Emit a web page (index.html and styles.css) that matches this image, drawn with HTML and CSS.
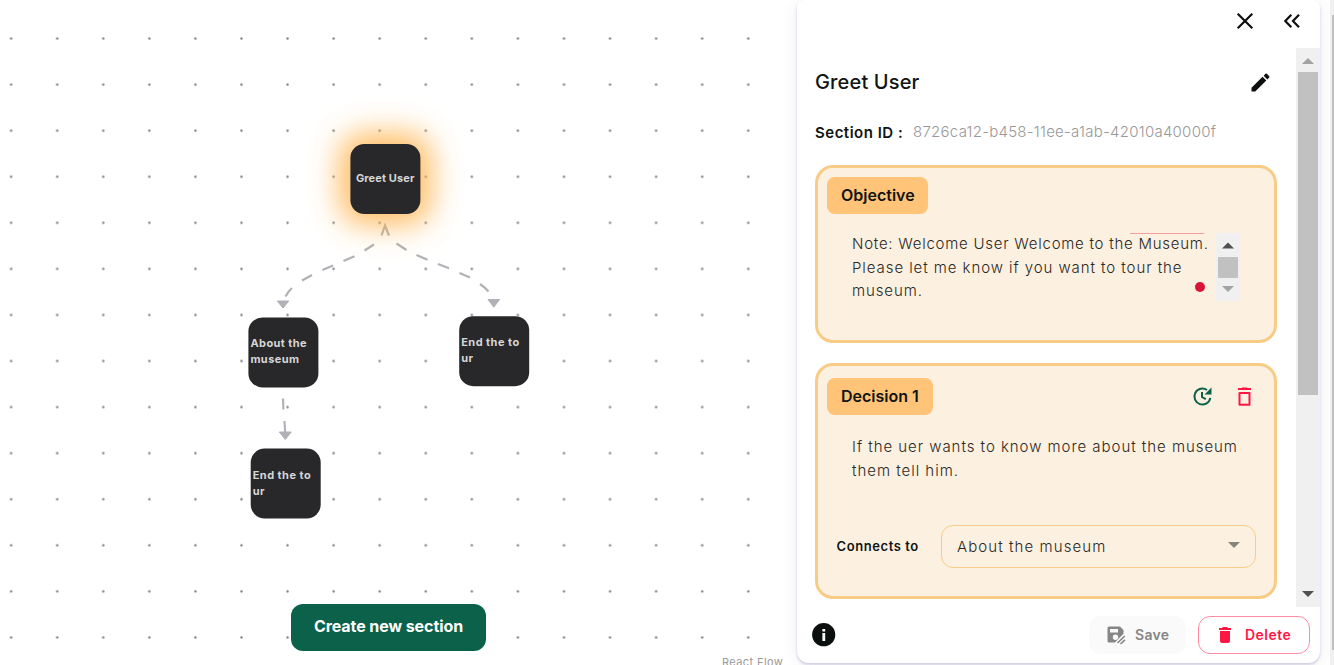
FILE: index.html
```html
<!DOCTYPE html>
<html lang="en">
<head>
<meta charset="utf-8">
<title>Section editor</title>
<link rel="stylesheet" href="styles.css">
</head>
<body>
<div class="app">
  <main class="canvas">
    <svg class="grid" width="786" height="665">
      <defs><pattern id="dots" x="-11.9" y="15.5" width="46.07" height="46.07" patternUnits="userSpaceOnUse"><circle cx="23.03" cy="23.03" r="1.2" fill="#81818a"/></pattern></defs>
      <rect width="786" height="665" fill="url(#dots)"/>
    </svg>
    <svg class="edges" width="786" height="665" fill="none" stroke="#b1b1b7" stroke-width="2.2">
      <path d="M381.5 235.5 385 225.500 389 235.500"/>
      <path d="M374 244.500 364.500 250.500M354.500 256.300 343.500 261M333 265.500 322.500 270M312 275 302 280.500M292 288 Q288 291.500 285.500 296.500"/>
      <path d="M396.500 243.500 406.500 250M416.500 255 427.500 259.800M438 264 449 268.300M459.500 273 470 277.500M480 284 Q485 287.500 488.500 291.500"/>
      <path d="M283 398.500 283.400 409.500M284.500 421 285.200 433"/>
      <path fill="#b1b1b7" stroke-width="1" stroke-linejoin="round" d="M277.200 301h11.600L283 308zM488 299.500h11.600L493.800 307.200zM279.300 432h12L285.300 439.500z"/>
    </svg>
    <div class="node greet"><span>Greet User</span></div>
    <div class="node about"><span>About the<br>museum</span></div>
    <div class="node end-right"><span>End the to<br>ur</span></div>
    <div class="node end-left"><span>End the to<br>ur</span></div>
    <button class="create"><span>Create new section</span></button>
    <span class="attribution">React Flow</span>
  </main>

  <aside class="panel">
    <header class="panel-head">
      <svg width="24" height="24" viewBox="0 0 24 24" fill="none" stroke="#0d100f" stroke-width="2.200"><path d="M4.700 4.700 19.300 19.300M19.300 4.700 4.700 19.300"/></svg>
      <svg width="24" height="24" viewBox="0 0 24 24" fill="none" stroke="#0d100f" stroke-width="2.200"><path d="M11.300 5.800 5.300 12l6 6.200M19 5.800 13 12l6 6.200"/></svg>
    </header>
    <div class="scroll">
      <div class="content">
        <div class="title-row">
          <h1>Greet User</h1>
          <svg width="24" height="24" viewBox="0 0 24 24" fill="#0d100f"><path d="M3.500 17.800V21.500h3.750L18.310 10.500l-3.750-3.750zM21.210 7.600a1 1 0 0 0 0-1.410l-2.340-2.340a1 1 0 0 0-1.410 0l-1.830 1.830 3.750 3.750z"/></svg>
        </div>
        <div class="id-row"><b>Section ID :</b><span>8726ca12-b458-11ee-a1ab-42010a40000f</span></div>
        <section class="card objective">
          <div class="badge obj-badge">Objective</div>
          <div class="textarea">
            <p><span class="n1">Note: Welcome User Welcome to the Museum.</span><br><span class="n2">Please let me know if you want to tour the</span><br><span class="n3">museum.</span></p>
            <div class="mini-bar">
              <svg width="24" height="24"><path d="M6 15.500 12 9.500 18 15.500z" fill="#505050"/></svg>
              <i></i>
              <svg width="24" height="24"><path d="M6 8 18 8 12 14z" fill="#a3a3a3"/></svg>
            </div>
            <span class="rule"></span><span class="dot"></span>
          </div>
        </section>
        <section class="card decision">
          <div class="card-head">
            <div class="badge dec-badge">Decision 1</div>
            <div class="actions">
              <svg width="24" height="24" viewBox="0 0 24 24" fill="none" stroke="#0b6149" stroke-width="2"><path d="M19.300 12.800A8 8 0 1 1 16 5M11 7V12L14.800 14.200" /><path d="M20.500 2.500v7h-7z" fill="#0b6149" stroke="none"/></svg>
              <svg width="24" height="24" viewBox="0 0 24 24" fill="none" stroke="#ff1744" stroke-width="2" stroke-linejoin="round"><path d="M6.500 8H16.500V19.700H6.500zM5 4H18M9 3.500H14"/></svg>
            </div>
          </div>
          <p class="decision-text"><span class="d1">If the uer wants to know more about the museum</span><br><span class="d2">them tell him.</span></p>
          <div class="connect">
            <label>Connects to</label>
            <div class="select"><span>About the museum</span><svg width="12" height="6"><path d="M0 0h12L6 6z" fill="#87857a"/></svg></div>
          </div>
        </section>
      </div>
      <div class="bar">
        <svg width="24" height="24"><path d="M6 16 12 10 18 16z" fill="#a3a3a3"/></svg>
        <i></i>
        <svg class="down" width="24" height="24"><path d="M6 8 18 8 12 14z" fill="#505050"/></svg>
      </div>
    </div>
    <footer class="panel-foot">
      <svg class="info" width="24" height="24" viewBox="0 0 24 24"><circle cx="11.700" cy="11.700" r="11.600" fill="#0b0f0e"/><path d="M10.400 6h2.800v2.400h-2.800zM10.400 10h2.800v8h-2.800z" fill="#fff"/></svg>
      <button class="save">
        <svg width="20" height="20" viewBox="0 0 20 20"><path fill="#868686" fill-rule="evenodd" d="M3 1.500h11L17.500 5V9L9.500 17.500H3Q1.500 17.500 1.500 16V3Q1.500 1.500 3 1.500zM4 4v3.500h8V4zM9.500 9.500a2.700 2.700 0 1 0 0 5.400 2.700 2.700 0 0 0 0-5.400z"/><path d="M10 18.500 18 10.500" stroke="#fafafa" stroke-width="3"/><path d="M11.500 18 18.800 11M14.500 19 19 14.800" stroke="#868686" stroke-width="1.600"/></svg>
        <span>Save</span>
      </button>
      <button class="delete">
        <svg width="12" height="16"><path fill="#ff1744" d="M0 1h3l1-1h4l1 1h3v2H0zM1 4h10v10q0 2-2 2H3q-2 0-2-2z"/></svg>
        <span>Delete</span>
      </button>
    </footer>
  </aside>
  <div class="page-bar"><i></i></div>
</div>
</body>
</html>
```

FILE: styles.css
```css
* { box-sizing: border-box; }
body { margin: 0; background: #fff; font-family: Inter, sans-serif; color: #101413; overflow: hidden; }
svg { display: block; flex: none; }
button { font-family: inherit; padding: 0; }
h1, p { margin: 0; }
span { white-space: nowrap; }
.app { display: flex; width: 1334px; height: 665px; overflow: hidden; }
.canvas { position: relative; width: 797px; height: 665px; flex: none; }
.grid, .edges { position: absolute; left: 0; top: 0; }
.node { position: absolute; width: 70px; height: 70px; border-radius: 14px; background: #28282a; color: #d6d6d6; display: flex; align-items: center; padding: 0 0 3px 2px; font-size: 11px; font-weight: 700; line-height: 16px; letter-spacing: .42px; }
.greet { left: 350px; top: 144px; padding: 0 0 2px 5.500px; box-shadow: 0 0 30px 11px rgba(255, 177, 73, .85); letter-spacing: .12px; transform: translateX(.4px); }
.about { left: 248px; top: 317px; transform: translate(.4px, .4px); }
.end-right { left: 459px; top: 316px; transform: translate(.2px, .2px); }
.end-left { left: 250px; top: 448px; transform: translate(.7px, .6px); }
.end-left, .end-right { letter-spacing: .46px; padding-bottom: 2px; }
.create { position: absolute; left: 291px; top: 604px; width: 195px; height: 47px; border: 0; border-radius: 12px; background: #0b6149; color: #fff; font-size: 16px; font-weight: 700; letter-spacing: -.07px; padding-bottom: 3px; }
.attribution { position: absolute; left: 722px; top: 655px; font-size: 11px; line-height: 14px; letter-spacing: .4px; color: #999; }
.panel { width: 523px; height: 663px; flex: none; display: flex; flex-direction: column; background: #fff; border-radius: 8px 8px 12px 12px; box-shadow: 0 2px 3px rgba(70, 60, 130, .22), 0 2px 18px rgba(70, 60, 130, .08); position: relative; }
.panel-head { height: 48px; display: flex; justify-content: flex-end; gap: 23px; padding: 9px 16px 0 0; }
.scroll { height: 559px; display: flex; }
.content { width: 499px; padding: 19px 19px 0 18px; }
.title-row { height: 30px; display: flex; justify-content: space-between; align-items: center; padding-right: 5px; }
h1 { font-size: 20px; line-height: 30px; font-weight: 500; letter-spacing: .15px; }
.id-row { height: 30px; margin-top: 20px; margin-bottom: 18px; display: flex; align-items: center; font-size: 15px; }
.id-row b { width: 98px; font-weight: 600; letter-spacing: .5px; }
.id-row span { font-weight: 300; color: #999; letter-spacing: .26px; padding-bottom: 1px; }
.card { width: 462px; border: 3px solid #f8cc86; border-radius: 18px; background: #fcf0e0; }
.objective { height: 178px; padding: 9px; }
.decision { height: 236px; margin-top: 20px; padding: 12px 9px; }
.badge { height: 37px; border-radius: 8px; background: #ffc478; display: flex; align-items: center; padding: 0 0 2px 14px; font-size: 16px; font-weight: 600; }
.obj-badge { width: 101px; }
.dec-badge { width: 106px; }
.textarea { position: relative; display: flex; justify-content: space-between; margin: 19px 25px 0; height: 68px; }
.textarea p { margin-top: -1px; }
.textarea p, .decision-text { font-size: 15px; line-height: 23.500px; font-weight: 300; color: #292925; }
.n1 { letter-spacing: .75px; }
.n2 { letter-spacing: .93px; }
.n3 { letter-spacing: .9px; }
.d1 { letter-spacing: .96px; }
.d2 { letter-spacing: .98px; }
.mini-bar { width: 24px; height: 68px; background: #f0f0f0; flex: none; }
.mini-bar i { display: block; width: 20px; height: 21px; margin: 0 2px; background: #c1c1c1; }
.rule { position: absolute; left: 278px; top: 0; width: 74px; height: 1px; background: #f6a0a4; }
.dot { position: absolute; left: 343px; top: 49px; width: 10px; height: 10px; border-radius: 50%; background: #d91438; }
.card-head { display: flex; justify-content: space-between; align-items: center; }
.actions { display: flex; gap: 18px; padding-right: 8px; }
.decision-text { margin: 20px 0 0 25px; }
.connect { display: flex; align-items: center; margin: 43px 9px 0; }
.connect label { width: 105px; font-size: 13px; font-weight: 600; white-space: nowrap; letter-spacing: .58px; padding: 0 0 2px .5px; }
.select { width: 315px; height: 43px; border: 1px solid #f8cc86; border-radius: 12px; display: flex; justify-content: space-between; align-items: center; padding: 0 15px; font-size: 15px; font-weight: 300; color: #292925; }
.select span { letter-spacing: 1.08px; }
.select svg { margin-top: -3px; }
.bar { width: 24px; height: 559px; background: #f0f0f0; display: flex; flex-direction: column; }
.bar i { width: 20px; height: 323px; margin: 0 2px; background: #c1c1c1; }
.down { margin-top: auto; }
.panel-foot { height: 56px; display: flex; align-items: center; padding: 0 10px 0 15px; }
.info { margin-right: auto; }
.save, .delete { height: 38px; border-radius: 12px; display: flex; align-items: center; font-size: 14px; font-weight: 600; }
.save { width: 97px; border: 0; background: #fafafa; color: #868686; padding-left: 17px; gap: 9px; margin-right: 12px; letter-spacing: .3px; }
.delete { width: 112px; border: 1px solid #ff8ba2; background: #fff; color: #ff1744; padding-left: 20px; gap: 14px; letter-spacing: .45px; }
.save span, .delete span { padding-bottom: 2px; }
.page-bar { width: 4px; height: 665px; margin-left: 10px; background: #f0f0f0; padding: 15px 0 0 2px; position: relative; }
.page-bar i { display: block; height: 635px; background: #c1c1c1; }
```
